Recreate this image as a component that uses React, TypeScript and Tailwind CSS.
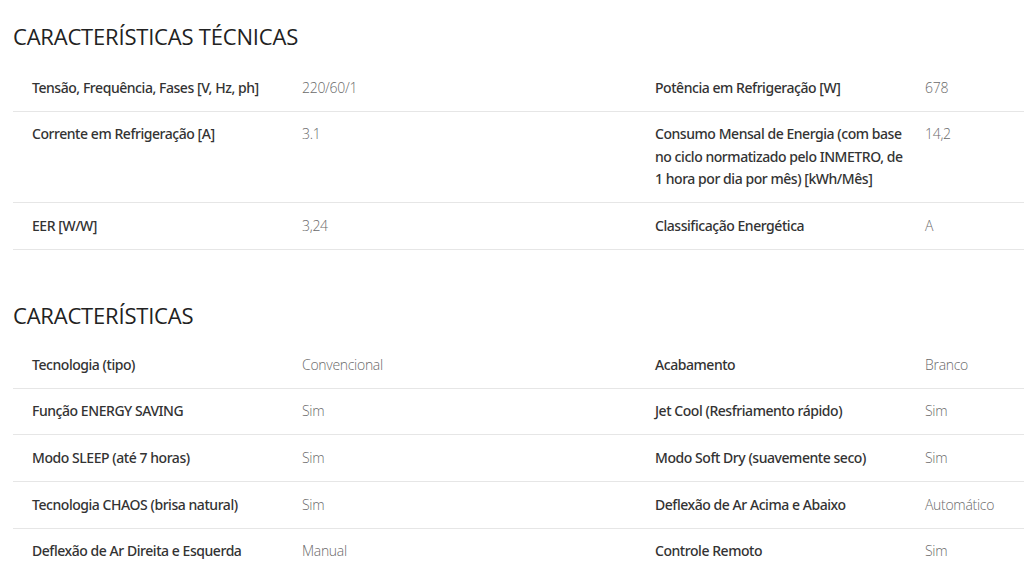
import React from "react";

type Row = [string, string, string, string];

const tech: Row[] = [
  ["Tensão, Frequência, Fases [V, Hz, ph]", "220/60/1", "Potência em Refrigeração [W]", "678"],
  [
    "Corrente em Refrigeração [A]",
    "3.1",
    "Consumo Mensal de Energia (com base no ciclo normatizado pelo INMETRO, de 1 hora por dia por mês) [kWh/Mês]",
    "14,2",
  ],
  ["EER [W/W]", "3,24", "Classificação Energética", "A"],
];

const feats: Row[] = [
  ["Tecnologia (tipo)", "Convencional", "Acabamento", "Branco"],
  ["Função ENERGY SAVING", "Sim", "Jet Cool (Resfriamento rápido)", "Sim"],
  ["Modo SLEEP (até 7 horas)", "Sim", "Modo Soft Dry (suavemente seco)", "Sim"],
  ["Tecnologia CHAOS (brisa natural)", "Sim", "Deflexão de Ar Acima e Abaixo", "Automático"],
  ["Deflexão de Ar Direita e Esquerda", "Manual", "Controle Remoto", "Sim"],
];

const labelCls = "font-['Noto_Sans',sans-serif] font-medium tracking-[-0.45px] text-[#333333]";

function Table({ rows, last }: { rows: Row[]; last: boolean }) {
  return (
    <div className="flex flex-col">
      {rows.map((r, i) => (
        <div
          key={i}
          className={
            "flex items-start py-[11.6px] text-[14px] leading-[22.5px] " +
            (i < rows.length - 1 || !last ? "border-b border-[#e6e6e6]" : "")
          }
        >
          <div className={"w-[270px] shrink-0 pl-[19px] pr-[10px] " + labelCls}>{r[0]}</div>
          <div className="w-[353px] shrink-0 pl-[19px] font-light tracking-[-0.3px] text-[#6a6a6a]">{r[1]}</div>
          <div className={"w-[270px] shrink-0 pl-[19px] " + labelCls}>{r[2]}</div>
          <div className="flex-1 pl-[19px] font-light tracking-[-0.3px] text-[#6a6a6a]">{r[3]}</div>
        </div>
      ))}
    </div>
  );
}

export default function App() {
  return (
    <div
      className="w-[1024px] h-[576px] overflow-hidden bg-white pl-[13px]"
      style={{ fontFamily: '"Open Sans", "Noto Sans", sans-serif' }}
    >
      <h2 className="pt-[22px] pb-[15px] text-[22px] leading-[28px] font-normal text-[#222222] tracking-[-0.2px]">
        CARACTERÍSTICAS TÉCNICAS
      </h2>
      <Table rows={tech} last={false} />
      <h2 className="pt-[51px] pb-[13px] text-[22px] leading-[28px] font-normal text-[#222222] tracking-[-0.2px]">
        CARACTERÍSTICAS
      </h2>
      <Table rows={feats} last={true} />
    </div>
  );
}
